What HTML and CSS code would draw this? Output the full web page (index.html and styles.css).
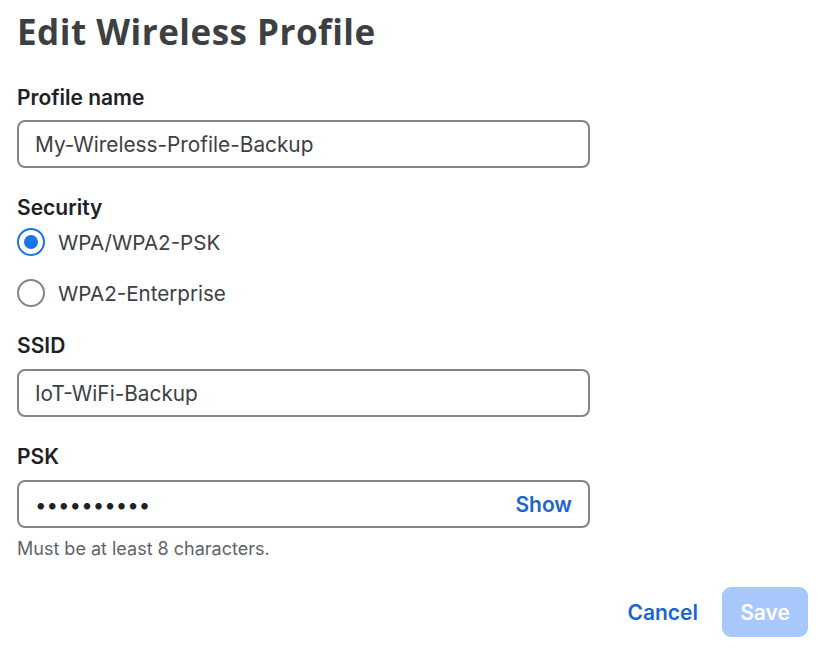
FILE: index.html
```html
<!DOCTYPE html>
<html>
<head>
<meta charset="utf-8">
<link rel="stylesheet" href="styles.css">
</head>
<body>
<div class="dialog">
  <h1 class="title">Edit Wireless Profile</h1>
  <div class="field">
    <label class="label">Profile name</label>
    <div class="input"><span class="value">My-Wireless-Profile-Backup</span></div>
  </div>
  <div class="field security">
    <div class="label">Security</div>
    <div class="radio-list">
      <div class="radio-row"><span class="radio checked"><span class="dot"></span></span><span class="radio-text">WPA/WPA2-PSK</span></div>
      <div class="radio-row"><span class="radio"></span><span class="radio-text">WPA2-Enterprise</span></div>
    </div>
  </div>
  <div class="field ssid">
    <label class="label">SSID</label>
    <div class="input"><span class="value">IoT-WiFi-Backup</span></div>
  </div>
  <div class="field psk">
    <label class="label">PSK</label>
    <div class="input"><span class="value dots">••••••••••</span><span class="show">Show</span></div>
    <div class="help">Must be at least 8 characters.</div>
  </div>
  <div class="actions">
    <span class="cancel">Cancel</span>
    <span class="save">Save</span>
  </div>
</div>
</body>
</html>
```
FILE: styles.css
```css
* { box-sizing: border-box; }
body {
  margin: 0;
  background: #fff;
  font-family: Inter, "Noto Sans", sans-serif;
  color: #202124;
}
.dialog {
  padding: 10px 21px 0 17px;
  display: flex;
  flex-direction: column;
}
.title {
  margin: 0 0 32px 0;
  font-family: "Open Sans", sans-serif;
  font-weight: 700;
  font-size: 35px;
  line-height: 44px;
  color: #3c4043;
  letter-spacing: 0.5px;
}
.field {
  width: 573px;
  display: flex;
  flex-direction: column;
}
.label {
  font-size: 21px;
  font-weight: 600;
  line-height: 24px;
  color: #202124;
  margin-bottom: 10px;
}
.input {
  height: 48px;
  border: 2.5px solid #80868b;
  border-radius: 8px;
  display: flex;
  align-items: center;
  justify-content: space-between;
  padding: 0 16px 0 16px;
}
.value {
  font-size: 20.8px;
  color: #3c4043;
}
.dots {
  font-size: 20.5px;
  letter-spacing: 0;
  color: #202124;
}
.show {
  font-size: 21px;
  font-weight: 600;
  color: #1a66c9;
}
.security { margin-top: 28px; }
.security .label { margin-bottom: 1px; }
.radio-list {
  display: flex;
  flex-direction: column;
  gap: 9px;
}
.radio-row {
  display: flex;
  align-items: center;
  height: 42px;
}
.radio {
  width: 28px;
  height: 28px;
  border-radius: 50%;
  border: 2.5px solid #80868b;
  display: flex;
  align-items: center;
  justify-content: center;
  margin-right: 13px;
}
.radio.checked { border-color: #1a73e8; }
.dot {
  width: 14px;
  height: 14px;
  border-radius: 50%;
  background: #1a73e8;
}
.radio-text {
  font-size: 20.6px;
  color: #3c4043;
}
.ssid { margin-top: 20px; }
.ssid .label, .psk .label { margin-bottom: 11px; }
.psk { margin-top: 28px; }
.help {
  margin-top: 10px;
  font-size: 18px;
  line-height: 22px;
  color: #5f6368;
}
.actions {
  display: flex;
  justify-content: flex-end;
  align-items: center;
  gap: 24px;
  margin-top: 27px;
}
.cancel {
  font-size: 21px;
  font-weight: 600;
  color: #1a66c9;
}
.save {
  width: 86px;
  height: 50px;
  border-radius: 9px;
  background: #a8c7fa;
  color: #fff;
  font-size: 21px;
  font-weight: 600;
  display: flex;
  align-items: center;
  justify-content: center;
}
```
